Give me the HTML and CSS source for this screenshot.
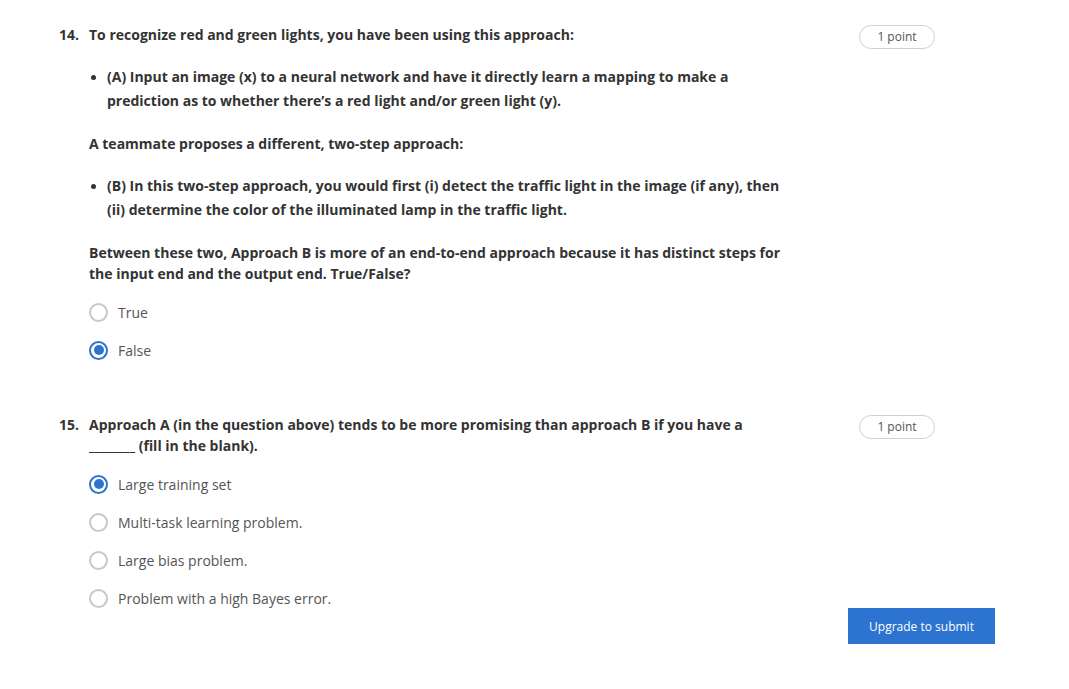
FILE: index.html
```html
<!DOCTYPE html>
<html>
<head>
<meta charset="utf-8">
<link rel="stylesheet" href="styles.css">
</head>
<body>
<div class="page">
  <div class="question">
    <div class="q-main">
      <div class="q-head">
        <span class="q-num">14.</span>
        <div class="q-body">
          <p class="para">To recognize red and green lights, you have been using this approach:</p>
          <ul class="bullets">
            <li>(A) Input an image (x) to a neural network and have it directly learn a mapping to make a prediction as to whether there’s a red light and/or green light (y).</li>
          </ul>
          <p class="para">A teammate proposes a different, two-step approach:</p>
          <ul class="bullets">
            <li>(B) In this two-step approach, you would first (i) detect the traffic light in the image (if any), then (ii) determine the color of the illuminated lamp in the traffic light.</li>
          </ul>
          <p class="para">Between these two, Approach B is more of an end-to-end approach because it has distinct steps for the input end and the output end. True/False?</p>
        </div>
      </div>
      <div class="options">
        <label class="option"><span class="radio"></span><span class="opt-text">True</span></label>
        <label class="option"><span class="radio checked"></span><span class="opt-text">False</span></label>
      </div>
    </div>
    <div class="points">1 point</div>
  </div>

  <div class="question q2">
    <div class="q-main">
      <div class="q-head">
        <span class="q-num">15.</span>
        <div class="q-body">
          <p class="para">Approach A (in the question above) tends to be more promising than approach B if you have a ________ (fill in the blank).</p>
        </div>
      </div>
      <div class="options">
        <label class="option"><span class="radio checked"></span><span class="opt-text">Large training set</span></label>
        <label class="option"><span class="radio"></span><span class="opt-text">Multi-task learning problem.</span></label>
        <label class="option"><span class="radio"></span><span class="opt-text">Large bias problem.</span></label>
        <label class="option"><span class="radio"></span><span class="opt-text">Problem with a high Bayes error.</span></label>
      </div>
    </div>
    <div class="points">1 point</div>
  </div>

  <div class="footer">
    <button class="submit">Upgrade to submit</button>
  </div>
</div>
</body>
</html>
```

FILE: styles.css
```css
html, body {
  margin: 0;
  padding: 0;
  background: #ffffff;
}
body {
  font-family: "Open Sans", "Noto Sans", sans-serif;
  color: #333333;
}
.page {
  width: 936px;
  padding: 24px 0 0 59px;
}
.question {
  display: flex;
  align-items: flex-start;
}
.q2 {
  margin-top: 54px;
}
.q-main {
  width: 740px;
}
.q-head {
  display: flex;
}
.q-num {
  width: 30px;
  flex: none;
  font-size: 14px;
  font-weight: 700;
  line-height: 21px;
}
.q-body {
  width: 696px;
}
.para {
  margin: 0 0 20px 0;
  font-size: 14px;
  font-weight: 700;
  line-height: 21px;
}
.para:last-child {
  margin-bottom: 0;
}
.bullets {
  list-style: none;
  margin: 0 0 20px 0;
  padding: 0;
}
.bullets li {
  position: relative;
  padding-left: 18px;
  font-size: 14px;
  font-weight: 700;
  line-height: 24px;
}
.bullets li::before {
  content: "";
  position: absolute;
  left: 2px;
  top: 10px;
  width: 5px;
  height: 5px;
  border-radius: 50%;
  background: #333333;
}
.options {
  margin-top: 18px;
  margin-left: 30px;
  display: flex;
  flex-direction: column;
  gap: 18px;
}
.option {
  display: flex;
  align-items: center;
  height: 20px;
  font-size: 14px;
  color: #555555;
}
.radio {
  box-sizing: border-box;
  width: 19px;
  height: 19px;
  border: 2px solid #c8c8c8;
  border-radius: 50%;
  margin-right: 10px;
  flex: none;
  position: relative;
}
.radio.checked {
  border-color: #2d73cf;
}
.radio.checked::after {
  content: "";
  position: absolute;
  left: 2.5px;
  top: 2.5px;
  width: 10px;
  height: 10px;
  border-radius: 50%;
  background: #2d73cf;
}
.points {
  margin-left: auto;
  margin-right: 60px;
  margin-top: 1px;
  box-sizing: border-box;
  width: 76px;
  height: 24px;
  border: 1px solid #d0d0d0;
  border-radius: 12px;
  font-size: 12px;
  line-height: 22px;
  text-align: center;
  color: #555555;
}
.footer {
  display: flex;
  justify-content: flex-end;
  margin-top: 0;
}
.submit {
  width: 147px;
  height: 36px;
  border: none;
  background: #2d74d1;
  color: #ffffff;
  font-family: "Open Sans", "Noto Sans", sans-serif;
  font-size: 12px;
  font-weight: 500;
  padding: 0;
}
```
